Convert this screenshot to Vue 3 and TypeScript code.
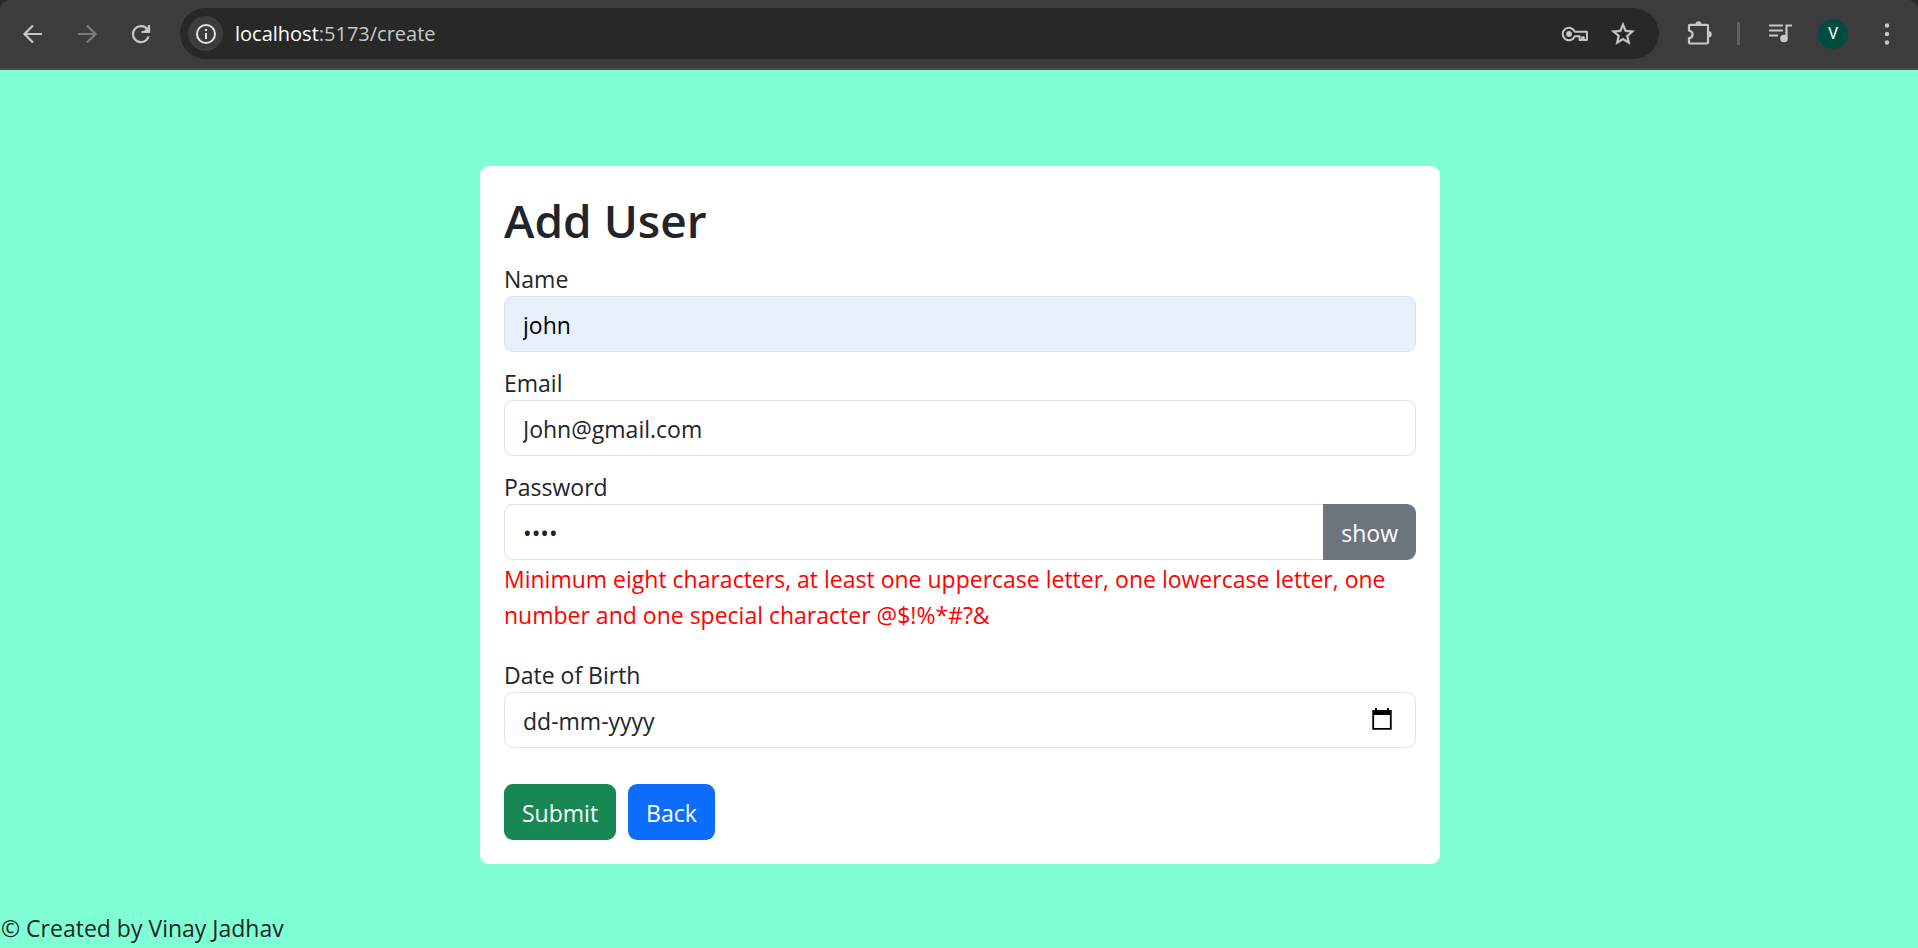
<script setup lang="ts">
import { computed, ref } from 'vue'

const name = ref('john')
const email = ref('John@gmail.com')
const password = ref('John')
const dob = ref('')
const revealed = ref(false)

const passwordError = computed(() =>
  /^(?=.*[a-z])(?=.*[A-Z])(?=.*\d)(?=.*[@$!%*#?&]).{8,}$/.test(password.value)
    ? ''
    : 'Minimum eight characters, at least one uppercase letter, one lowercase letter, one number and one special character @$!%*#?&',
)
</script>

<template>
  <div class="window">
    <div class="chrome">
      <header class="toolbar">
        <nav class="nav" aria-label="Browser navigation">
          <button type="button" class="tool" aria-label="Back">
            <svg width="28" height="28" viewBox="0 0 28 28" fill="none" stroke="currentColor" stroke-width="2.2"><path d="M23 14H6M14 5.5 5.5 14l8.500 8.500" /></svg>
          </button>
          <button type="button" class="tool dim" aria-label="Forward">
            <svg width="28" height="28" viewBox="0 0 28 28" fill="none" stroke="currentColor" stroke-width="2.2"><path d="M5 14h17M14 5.500 22.500 14 14 22.500" /></svg>
          </button>
          <button type="button" class="tool" aria-label="Reload">
            <svg width="28" height="28" viewBox="0 0 28 28" fill="none" stroke="currentColor" stroke-width="2.2"><path d="M21.600 16.500A8 8 0 1 1 20.500 9.500" /><path d="M22 5v7h-7.500" /><path d="M22 6v6h-6z" fill="currentColor" stroke="none" /></svg>
          </button>
        </nav>
        <div class="omnibox">
          <button type="button" class="info" aria-label="Site information">
            <svg width="22" height="22" viewBox="0 0 22 22" fill="none" stroke="currentColor" stroke-width="2"><circle cx="11" cy="11" r="9" /><path d="M11 10v6M11 6v2" /></svg>
          </button>
          <div class="url"><span class="host">localhost</span>:5173/create</div>
          <button type="button" class="tool small" aria-label="Saved passwords">
            <svg width="28" height="22" viewBox="0 0 30 24" fill="none" stroke="currentColor" stroke-width="2.200"><path d="M14.700 9.500A6.800 6.800 0 1 0 14.700 14.500H20V18.500h2.800v-3h1.700v3H28V9.500z" stroke-linejoin="round" /><circle cx="8.500" cy="12" r="3.200" fill="currentColor" stroke="none" /></svg>
          </button>
          <button type="button" class="tool small" aria-label="Bookmark this page">
            <svg width="28" height="28" viewBox="0 0 24 24" fill="currentColor" stroke="currentColor" stroke-width="0.300"><path d="M22 9.240l-7.190-.62L12 2 9.190 8.630 2 9.240l5.460 4.730L5.820 21 12 17.270 18.180 21l-1.630-7.030L22 9.240zM12 15.400l-3.760 2.270 1-4.280-3.320-2.880 4.380-.38L12 6.100l1.710 4.040 4.380.38-3.320 2.880 1 4.280L12 15.400z" /></svg>
          </button>
        </div>
        <div class="tools">
          <button type="button" class="tool" aria-label="Extensions">
            <svg width="28" height="28" viewBox="0 0 28 28"><path d="M5 4.800h17a1 1 0 0 1 1 1V22.500a1 1 0 0 1-1 1H5a1 1 0 0 1-1-1v-4.200c4.800-1.200 4.800-6.600 0-7.800v-4.700a1 1 0 0 1 1-1z" fill="none" stroke="currentColor" stroke-width="2.200" /><path d="M10.500 4.200a3 3 0 0 1 6 0zM23.500 11a3.200 3.200 0 0 1 0 6.400z" fill="currentColor" /></svg>
          </button>
          <span class="divider"></span>
          <button type="button" class="tool" aria-label="Media controls">
            <svg width="28" height="28" viewBox="0 0 28 28"><path d="M2 5.500h14M2 10.500h14M2 15.500h9M19.500 18V5.500H25" fill="none" stroke="currentColor" stroke-width="2.200" /><circle cx="17" cy="18.500" r="3.800" fill="currentColor" /></svg>
          </button>
          <button type="button" class="avatar" aria-label="Profile V">V</button>
          <button type="button" class="tool" aria-label="More">
            <svg width="28" height="28" viewBox="0 0 28 28" fill="currentColor"><circle cx="14" cy="5.500" r="2.200" /><circle cx="14" cy="14" r="2.200" /><circle cx="14" cy="22.500" r="2.200" /></svg>
          </button>
        </div>
      </header>
    </div>

    <main class="page">
      <form class="card" novalidate @submit.prevent>
        <h2>Add User</h2>
        <div class="field">
          <label for="name">Name</label>
          <input id="name" v-model="name" class="control filled" type="text" />
        </div>
        <div class="field">
          <label for="email">Email</label>
          <input id="email" v-model="email" class="control" type="email" />
        </div>
        <div class="field wide">
          <label for="password">Password</label>
          <div class="group">
            <input id="password" v-model="password" class="control" :type="revealed ? 'text' : 'password'" />
            <button type="button" class="btn grey" @click="revealed = !revealed">{{ revealed ? 'hide' : 'show' }}</button>
          </div>
          <p class="error">{{ passwordError }}</p>
        </div>
        <div class="field last">
          <label for="dob">Date of Birth</label>
          <div class="control date">
            <input id="dob" v-model="dob" type="text" placeholder="dd-mm-yyyy" />
            <button type="button" class="picker" aria-label="Show date picker">
              <svg width="20" height="22" viewBox="0 0 20 22"><path d="M1.200 3h17.600v17.800H1.200z" fill="none" stroke="#000" stroke-width="1.800" /><path d="M1 2h18v5H1zM3 0h2v3H3zM15 0h2v3h-2z" fill="#000" /></svg>
            </button>
          </div>
        </div>
        <div class="actions">
          <button type="submit" class="btn green">Submit</button>
          <a href="#" class="btn blue">Back</a>
        </div>
      </form>
    </main>
    <footer>© Created by Vinay Jadhav</footer>
  </div>
</template>

<style>
body {
  background: #7fffd4;
}
</style>

<style scoped>
* {
  box-sizing: border-box;
}
.window {
  min-height: 100vh;
  display: flex;
  flex-direction: column;
  background: #7fffd4;
  color: #212529;
  font: 23px/36px 'Open Sans', 'Noto Sans', sans-serif;
}
button,
input {
  font: inherit;
  color: inherit;
  margin: 0;
  padding: 0;
  border: 0;
  background: none;
}
.chrome {
  background: #282828;
}
.toolbar {
  display: flex;
  align-items: center;
  height: 70px;
  padding: 0 4px 1px 6px;
  background: #3c3c3c;
  border-bottom: 2px solid #4a4a4a;
  border-radius: 9px 9px 0 0;
  color: #c7c7c7;
}
.nav {
  display: flex;
  margin-right: 12px;
}
.tool {
  width: 54px;
  height: 40px;
  display: flex;
  align-items: center;
  justify-content: center;
}
.small {
  width: 48px;
}
.dim {
  color: #7a7a7a;
}
.omnibox {
  flex: 1;
  display: flex;
  align-items: center;
  height: 51px;
  padding: 0 12px 0 8px;
  border-radius: 26px;
  background: #282828;
}
.info {
  width: 35px;
  height: 35px;
  display: flex;
  align-items: center;
  justify-content: center;
  border-radius: 50%;
  background: #3c3c3c;
  color: #e3e3e3;
}
.url {
  flex: 1;
  margin-left: 12px;
  font-size: 20px;
}
.host {
  color: #fff;
}
.tools {
  display: flex;
  align-items: center;
  margin-left: 13px;
}
.divider {
  width: 3px;
  height: 23px;
  margin: 0 14px 0 11px;
  background: #5f5f5f;
}
.avatar {
  width: 30px;
  height: 30px;
  margin: 0 12px 0 10px;
  border-radius: 50%;
  background: #004d40;
  color: #fff;
  font: 16px/30px Roboto, sans-serif;
  text-align: center;
}
.page {
  flex: 1;
  display: flex;
  align-items: center;
  justify-content: center;
  padding: 49px 0 0 2px;
}
.card {
  width: calc(50% + 2px);
  padding: 24px;
  border-radius: 9px;
  background: #fff;
}
h2 {
  margin: 0 0 12px;
  padding-top: 2px;
  font-size: 46px;
  line-height: 56px;
  font-weight: 600;
}
.field {
  margin-bottom: 12px;
}
.wide {
  margin-bottom: 23px;
}
.last {
  margin-bottom: 36px;
}
label {
  display: block;
  padding-top: 2px;
  line-height: 34px;
}
.control {
  display: block;
  width: 100%;
  height: 56px;
  padding: 10px 18px 8px;
  border: 1px solid #dee2e6;
  border-radius: 9px;
  background: #fff;
}
.filled {
  background: #e8f0fe;
  color: #000;
}
.group {
  display: flex;
}
.group .control {
  flex: 1;
  border-right: 0;
  border-radius: 9px 0 0 9px;
}
.group .btn {
  border-radius: 0 9px 9px 0;
}
.error {
  margin: 0;
  padding-top: 1px;
  color: #f00;
}
.date {
  display: flex;
  align-items: center;
  padding-right: 23px;
}
.date input {
  flex: 1;
  min-width: 0;
  height: 36px;
}
.date input::placeholder {
  color: #212529;
  opacity: 1;
}
.picker {
  display: flex;
  padding-bottom: 3px;
}
.actions {
  display: flex;
  gap: 12px;
}
.btn {
  height: 56px;
  padding: 11px 18px 9px;
  border-radius: 9px;
  color: #fff;
  text-decoration: none;
  white-space: nowrap;
}
.grey {
  background: #6c757d;
}
.green {
  background: #198754;
}
.blue {
  background: #0d6efd;
}
footer {
  padding: 0 1px 2px;
}
</style>
